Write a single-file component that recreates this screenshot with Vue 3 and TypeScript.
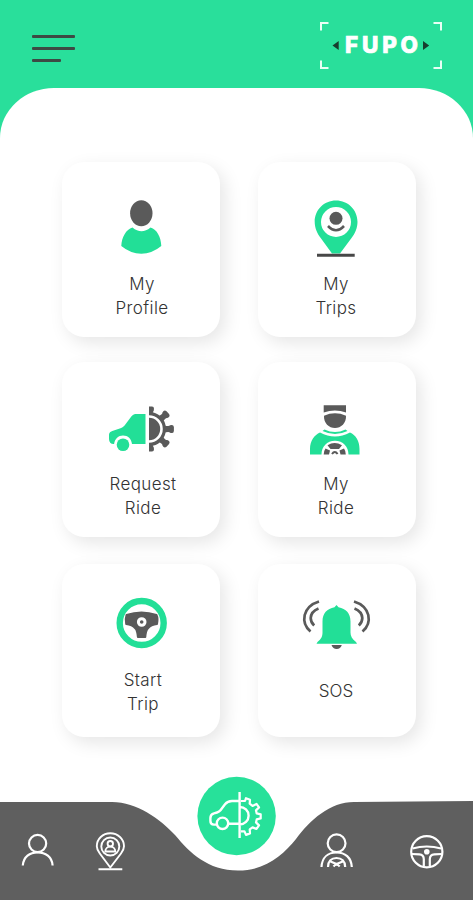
<script setup lang="ts">
interface Tile {
  id: string
  lines: string[]
  box: string
}

const tiles: Tile[] = [
  { id: 'profile', lines: ['My', 'Profile'], box: '101 195 80 67' },
  { id: 'trips', lines: ['My', 'Trips'], box: '297 195 80 67' },
  { id: 'request', lines: ['Request', 'Ride'], box: '101 395 80 67' },
  { id: 'ride', lines: ['My', 'Ride'], box: '297 395 80 67' },
  { id: 'start', lines: ['Start', 'Trip'], box: '101 594 80 67' },
  { id: 'sos', lines: ['SOS'], box: '297 594 80 67' },
]

const toothAngles = [-41, 0, 41]
</script>

<template>
  <div class="screen">
    <header class="header">
      <button class="menu" aria-label="Menu"><i></i><i></i><i class="short"></i></button>
      <svg class="logo" viewBox="319 21 124 49" width="124" height="49">
        <g fill="none" stroke="#e9fff5" stroke-width="2">
          <path d="M321 30.500V23h7.500M433.500 23h7.500v7.500M321 60.500V68h7.500M433.500 68h7.500v-7.500" />
        </g>
        <path d="M338.700 41v9l-6.200-4.500zM423 41v9l6.200-4.500z" fill="#173d2e" />
        <text x="345" y="53.300" textLength="73" lengthAdjust="spacing">FUPO</text>
      </svg>
    </header>

    <main class="sheet">
      <section class="grid">
        <article v-for="t in tiles" :key="t.id" class="card" :class="t.id">
          <svg class="icon" :viewBox="t.box" width="80" height="67">
            <g v-if="t.id === 'profile'">
              <ellipse cx="141.300" cy="213.300" rx="11.200" ry="13" class="dark" />
              <path class="green" d="M132.500 227.500Q141.500 235 150.500 227.500C157 229.500 161 237 161.300 246Q152 253.700 141.300 253.700T121.300 246C121.800 237 126 229.500 132.500 227.500Z" />
            </g>
            <g v-else-if="t.id === 'trips'">
              <path class="green" fill-rule="evenodd" d="M336 200.500c-12 0-21.300 9.500-21.300 21.200 0 6.500 2.500 11.500 6 16.300L332 253.500h8L351.500 238c3.600-4.800 6-9.800 6-16.300 0-11.700-9.500-21.200-21.500-21.200ZM336 207a15 15 0 1 1 0 30 15 15 0 0 1 0-30Z" />
              <circle cx="336" cy="218.300" r="6.500" class="dark" />
              <path class="dark-line" stroke-width="2.600" d="M328 226Q336 234.500 344 226" />
              <path stroke="#474747" stroke-width="3" d="M317 255.300h37.700" />
            </g>
            <g v-else-if="t.id === 'request'">
              <path class="green" d="M145.500 414v30H132c-.6-5.200-4-8.500-9-8.500-4.700 0-8 3-8.900 8.500-3.200.2-5.100-1.700-5.100-5v-4c0-2.400 1.300-3.600 4-4.300l7.500-2.400c2.500-1 3.800-2.300 5-4l6-8c1.500-1.900 2.800-2.300 5.300-2.300Z" />
              <circle cx="123" cy="444.700" r="6.300" class="green" />
              <path class="dark" d="M149 406.500h3q2 0 2 2.300t-1.200 3.400a17.300 17.300 0 0 1 0 33.600q1.200 1.200 1.200 3.400t-2 2.300h-3Z" />
              <g v-for="a in toothAngles" :key="a" :transform="`rotate(${a} 149 429)`">
                <path class="dark" d="M164 425.500q5.500 1.300 6-.2 3.500-1.300 3.900 1.800v3.800q-.4 3.100-3.900 1.800-.5-1.500-6-.2Z" />
              </g>
              <path d="M148 416.500h1a12.500 12.500 0 0 1 0 25h-1" fill="none" stroke="#fff" stroke-width="2.600" />
            </g>
            <g v-else-if="t.id === 'ride'">
              <path class="dark" d="M323.700 405.300h22.300v7.200q-11-4-22.300 0ZM324 415.700q11-4.700 22 0C346.500 423 341 428 335 428s-11.500-5-11-12.300Z" />
              <path class="green" d="M324.500 429.500q10.500 5 21 0l2 1.500q-12.500 6-25 0ZM320 432.500q15 8 30 0c5.500 2.500 9.500 8 9.500 16.500v5.500h-11c0-8-5.500-13.800-13.500-13.800s-13.500 5.800-13.500 13.800H310V449c0-8.500 4.500-14 10-16.500Z" />
              <path class="dark" d="M327.500 445.200q7-4.400 14.500 0l-3 3.800h-8.500ZM325.500 448.500l4.500 2-1 4h-5.300q0-3.500 1.800-6ZM344 448.500l-4.500 2 1 4h5.300q0-3.500-1.800-6Z" />
              <path class="dark-line" stroke-width="2" d="M332 454q2.800-4 5.600 0" />
            </g>
            <g v-else-if="t.id === 'start'">
              <circle cx="141.700" cy="623" r="22" fill="none" stroke="#22df97" stroke-width="6.400" />
              <path class="dark" stroke="#5a5a5a" stroke-width="2" stroke-linejoin="round" d="M126.500 615q15-5 30 0 1.700 3.500.5 9-6 .5-9.300 4.500-2 2.500-2.400 8.500h-7.400q-.5-6-2.400-8.500-3.300-4-9.300-4.500-1-5.500.3-9Z" />
              <circle cx="141.700" cy="622" r="3.300" fill="#5a5a5a" stroke="#fff" stroke-width="3" />
            </g>
            <g v-else>
              <path class="green" d="M336.500 605l2 2.300c7.500 1.300 12 6.200 12 14.200v11c0 3.500 1.500 6.500 5.500 9.500l1 1.700h-40.500l1-1.700c4-3 5-6 5-9.500v-11c0-8 4.500-12.900 12-14.200Z" />
              <path class="dark" d="M331.500 645h10.300q-1.300 4-5.100 4t-5.200-4Z" />
              <g class="dark-line" stroke-width="2.700">
                <path d="M319 601.500q-11.500 3.500-14.300 13.500c-1.300 6 .5 12 5.800 16.500" />
                <path d="M318.500 608.500q-7.500 3-7.800 9.500c0 3 1.300 5.500 3.500 7.500" />
                <path d="M354 601.500q11.500 3.500 14.300 13.500c1.300 6-.5 12-5.800 16.500" />
                <path d="M354.500 608.500q7.500 3 7.800 9.500c0 3-1.300 5.500-3.500 7.500" />
              </g>
            </g>
          </svg>
          <div class="label">
            <span v-for="l in t.lines" :key="l">{{ l }}</span>
          </div>
        </article>
      </section>
    </main>

    <nav class="nav">
      <svg viewBox="0 770 473 130" width="473" height="130">
        <path fill="#5f5f5f" d="M0 802H112C137 802 160 819 175 835C190 853 208 870.500 238 870.500C266 870.500 283 855 296 839C310 820 330 802 354 802L473 801V900H0Z" />
        <circle cx="236.600" cy="816" r="39.200" fill="#27e19a" />
        <g class="line" stroke-width="2.400">
          <path d="M239.500 801H232c-3 0-5 .8-7 3.300l-4.500 6c-1 1.300-2 1.800-3.500 2.200l-3 .8c-2.700.8-3.600 2.200-3.600 4.700v3c0 2.200 1.200 3.600 3.500 3.600h2.700M228.500 823.800h11" />
          <circle cx="222.500" cy="823.300" r="5.700" />
          <path d="M239.600 792v46M239.600 807c5 0 9 3.700 9 8.700s-4 8.800-9 8.800" />
          <path d="M241 801l4 0 1-2.800 4 1.500-.3 4 2.800 2.200 4-2 2.500 3.500-3 3 .7 3 4 1v4l-4 1-.7 3 3 3-2.500 3.500-4-1.500-2.800 2 .3 4-4 1.500-1.500-3.500H241" stroke-width="2.200" stroke-linejoin="round" />
        </g>
        <g class="line" stroke-width="2.200">
          <circle cx="37.600" cy="843.500" r="8.600" />
          <path d="M22.800 865.500c.6-8.500 7-13.200 14.800-13.200s14.500 4.700 15 13.200" />
        </g>
        <g class="line" stroke-width="1.900">
          <path d="M110.300 867.500l-10.500-14c-2-2.600-3-4.300-3-7.200 0-7.500 6-13 13.500-13s13.700 5.500 13.700 13c0 2.900-1 4.600-3 7.200Z" />
          <circle cx="110.300" cy="846.500" r="9" />
          <circle cx="110.300" cy="843.700" r="2.700" />
          <path d="M105.300 851.500c0-6.500 10-6.500 10 0ZM98.500 869.200h23.800" />
        </g>
        <g class="line" stroke-width="2.200">
          <circle cx="336.600" cy="843.200" r="8.900" />
          <path d="M321.500 867c.5-9.500 6.500-14.500 15-14.500s14.800 5 15.300 14.500" />
          <path d="M328 867c0-5.700 3.400-9 8.500-9s8.700 3.300 8.700 9M330.500 861.500l6.100 2.500 6.100-2.500M333.500 866.500q3-3.500 6.200 0" />
        </g>
        <g class="line" stroke-width="2.200">
          <circle cx="426.800" cy="851.800" r="15.600" />
          <path d="M412.500 848.500q14.300-4 28.600 0M411.800 854l7.500.3c3 .2 4.500 2 4.500 5v7M441.800 854l-7.500.3c-3 .2-4.500 2-4.500 5v7" />
          <circle cx="426.800" cy="851.700" r="1.700" fill="#fff" />
        </g>
      </svg>
    </nav>
  </div>
</template>

<style>
body {
  margin: 0;
}
</style>

<style scoped>
.screen {
  display: flex;
  flex-direction: column;
  width: 473px;
  height: 900px;
  overflow: hidden;
  background: #29df9b;
}
.header {
  display: flex;
  flex: none;
  justify-content: space-between;
  align-items: flex-start;
  box-sizing: border-box;
  height: 88px;
  padding: 21px 30px 0 32px;
}
.menu {
  display: flex;
  flex-direction: column;
  gap: 9px;
  margin: 14px 0 0;
  padding: 0;
  border: 0;
  background: none;
}
.menu i {
  width: 43px;
  height: 3px;
  border-radius: 1px;
  background: #3d4a44;
}
.menu .short {
  width: 29px;
}
.logo text {
  fill: #fff;
  stroke: #fff;
  stroke-width: 0.7px;
  font: 800 22.5px Inter, sans-serif;
}
.sheet {
  flex: 1;
  box-sizing: border-box;
  min-height: 0;
  padding: 74px 57px 0 62px;
  border-radius: 54px 54px 0 0 / 50px 50px 0 0;
  background: #fff;
}
.grid {
  display: grid;
  grid-template-columns: 158px 158px;
  grid-template-rows: 175px 175px 175px;
  column-gap: 38px;
  row-gap: 25px;
}
.card {
  display: flex;
  flex-direction: column;
  align-items: center;
  box-sizing: border-box;
  padding-top: 33px;
  border-radius: 22px;
  background: #fff;
  box-shadow: 5px 6px 18px rgba(0, 0, 0, 0.1);
}
.start,
.sos {
  margin-top: 2px;
  padding-top: 30px;
}
.icon {
  flex: none;
  display: block;
}
.label {
  display: flex;
  flex-direction: column;
  align-items: center;
  margin-top: 10px;
  padding-left: 4px;
  color: #333;
  font: 300 17px/24px Inter, sans-serif;
  letter-spacing: 0.4px;
}
.profile .label {
  padding-left: 2px;
}
.trips .label,
.ride .label,
.sos .label {
  padding: 0 2px 0 0;
}
.start .label {
  margin-top: 7px;
}
.sos .label {
  margin-top: 18px;
  letter-spacing: 0;
}
.green {
  fill: #22df97;
}
.dark {
  fill: #5a5a5a;
}
.dark-line {
  fill: none;
  stroke: #5a5a5a;
}
.nav {
  flex: none;
  position: relative;
  height: 130px;
  margin-top: -130px;
}
.nav svg {
  display: block;
}
.line {
  fill: none;
  stroke: #fff;
}
</style>
